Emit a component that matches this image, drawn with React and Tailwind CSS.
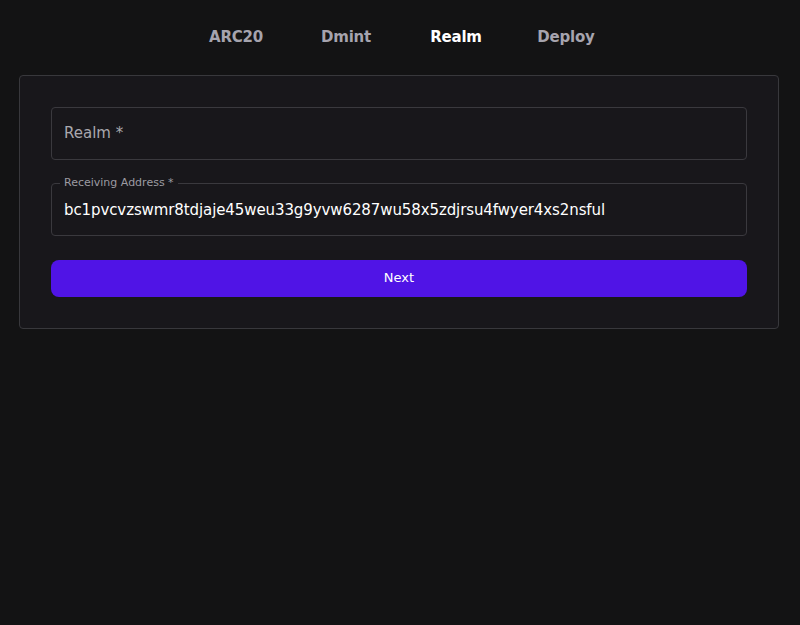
export default function App() {
  const tabs = ['ARC20', 'Dmint', 'Realm', 'Deploy'];
  return (
    <div className="min-h-[625px] w-full bg-[#131314] pl-[19px] pr-[21px] pt-[26px] font-['DejaVu_Sans',sans-serif]">
      {/* Tabs */}
      <div className="flex justify-center gap-[60px] pl-[4px]">
        {tabs.map((t) => (
          <button
            key={t}
            className={`w-[50px] text-center text-[15px] font-semibold tracking-[-0.2px] whitespace-nowrap flex justify-center ${
              t === 'Realm' ? 'text-white' : 'text-[#a6a4ae]'
            }`}
          >
            {t}
          </button>
        ))}
      </div>

      {/* Card */}
      <div className="mt-[26px] rounded-[4px] border border-[#38383c] bg-[#18171b] px-[31px] pt-[31px] pb-[31px]">
        <div className="flex h-[53px] items-center rounded-[4px] border border-[#3a393e] px-[12px]">
          <span className="text-[15px] text-[#a9a8ae]">Realm *</span>
        </div>

        <div className="relative mt-[23px] flex h-[53px] items-center rounded-[4px] border border-[#3a393e] px-[12px]">
          <span className="absolute -top-[8px] left-[8px] bg-[#18171b] px-[4px] text-[11px] leading-[14px] text-[#9c9ba2]">
            Receiving Address *
          </span>
          <span className="pt-[2px] text-[15px] tracking-[-0.1px] text-white">
            bc1pvcvzswmr8tdjaje45weu33g9yvw6287wu58x5zdjrsu4fwyer4xs2nsful
          </span>
        </div>

        <button className="mt-[24px] flex h-[37px] w-full items-center justify-center rounded-[8px] bg-[#5014e6] text-[13px] font-medium text-white">
          Next
        </button>
      </div>
    </div>
  );
}
